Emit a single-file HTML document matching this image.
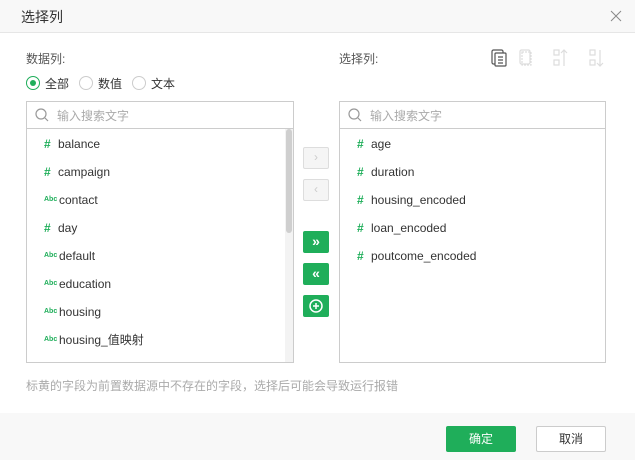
<!DOCTYPE html>
<html><head><meta charset="utf-8"><style>
*{box-sizing:border-box;margin:0;padding:0}
body{width:635px;height:460px;background:#fff;font-family:"Liberation Sans","Noto Sans CJK SC",sans-serif;font-size:12px;color:#333;position:relative;overflow:hidden}
.abs{position:absolute}
.hdr{left:0;top:0;width:635px;height:33px;background:#f8f8f8;border-bottom:1px solid #e6e6e6}
.box{border:1px solid #ccc;background:#fff}
.search{height:27px;border-bottom:1px solid #ccc;position:relative}
.search span{position:absolute;left:30px;top:5px;color:#aaa;font-size:12px}
.item{position:absolute;left:17px;font-size:12px;color:#333;height:16px;line-height:16px}
.item i{font-style:normal;color:#1fae5a;font-weight:bold;display:inline-block;width:14px}
.item i.a{font-size:7px;font-weight:bold;vertical-align:3px;width:15px}
.btn{position:absolute;left:303px;width:26px;height:22px;border-radius:2px}
.g{background:#1fae5a;color:#fff;text-align:center;line-height:21px;font-weight:bold;font-size:14px}
.d{border:1px solid #ddd;background:#f5f5f5;color:#ccc;text-align:center;line-height:19px;font-size:12px}
</style></head><body>
<div class="abs hdr"></div>
<div class="abs" style="left:21px;top:7px;font-size:14px;color:#333">选择列</div>
<svg class="abs" style="left:610px;top:10px" width="12" height="12"><path d="M1 1L11 11M11 1L1 11" stroke="#888" stroke-width="1"/></svg>
<div class="abs" style="left:26px;top:50px;color:#555">数据列:</div>
<div class="abs" style="left:26px;top:76px;width:14px;height:14px;border:1px solid #1fae5a;border-radius:50%"></div>
<div class="abs" style="left:30px;top:80px;width:6px;height:6px;background:#1fae5a;border-radius:50%"></div>
<div class="abs" style="left:45px;top:75px;color:#333">全部</div>
<div class="abs" style="left:79px;top:76px;width:14px;height:14px;border:1px solid #ccc;border-radius:50%"></div>
<div class="abs" style="left:98px;top:75px;color:#333">数值</div>
<div class="abs" style="left:132px;top:76px;width:14px;height:14px;border:1px solid #ccc;border-radius:50%"></div>
<div class="abs" style="left:151px;top:75px;color:#333">文本</div>

<div class="abs" style="left:339px;top:50px;color:#555">选择列:</div>
<svg class="abs" style="left:491px;top:48px" width="120" height="20" fill="none" stroke-width="1.2">
<rect x="1" y="2" width="11" height="14" rx="1.5" stroke="#555"/><rect x="4" y="5" width="11" height="13" rx="1" stroke="#555" fill="#fff"/><path d="M7 9h5M7 12h5M7 15h5" stroke="#555"/>
<rect x="29" y="2" width="10" height="14" rx="1.5" stroke="#ddd"/><rect x="31" y="4" width="9" height="13" stroke="#ddd" stroke-dasharray="2 1"/>
<rect x="63" y="2" width="5" height="5" stroke="#ddd"/><rect x="63" y="12" width="5" height="5" stroke="#ddd"/><path d="M73 18V2M70 5l3-3 3 3" stroke="#ddd"/>
<rect x="99" y="2" width="5" height="5" stroke="#ddd"/><rect x="99" y="12" width="5" height="5" stroke="#ddd"/><path d="M109 2v16M106 15l3 3 3-3" stroke="#ddd"/>
</svg>

<div class="abs box" style="left:26px;top:101px;width:268px;height:262px">
<div class="search"><svg style="position:absolute;left:8px;top:6px" width="14" height="14" fill="none" stroke="#999" stroke-width="1.2"><circle cx="6" cy="6" r="5"/><path d="M10 10l3 3"/></svg><span>输入搜索文字</span></div>
<div class="item" style="top:34px"><i>#</i>balance</div>
<div class="item" style="top:62px"><i>#</i>campaign</div>
<div class="item" style="top:90px"><i class="a">Abc</i>contact</div>
<div class="item" style="top:118px"><i>#</i>day</div>
<div class="item" style="top:146px"><i class="a">Abc</i>default</div>
<div class="item" style="top:174px"><i class="a">Abc</i>education</div>
<div class="item" style="top:202px"><i class="a">Abc</i>housing</div>
<div class="item" style="top:230px"><i class="a">Abc</i>housing_值映射</div>
<div style="position:absolute;left:258px;top:27px;width:8px;height:233px;background:#f3f3f3"></div>
<div style="position:absolute;left:259px;top:27px;width:6px;height:104px;background:#cfcfcf;border-radius:3px"></div>
</div>

<div class="btn d" style="top:147px">›</div>
<div class="btn d" style="top:179px">‹</div>
<div class="btn g" style="top:231px">»</div>
<div class="btn g" style="top:263px">«</div>
<div class="btn g" style="top:295px"><svg width="14" height="14" style="margin-top:4px" fill="none" stroke="#fff" stroke-width="1.5"><circle cx="7" cy="7" r="6"/><path d="M7 4v6M4 7h6"/></svg></div>

<div class="abs box" style="left:339px;top:101px;width:267px;height:262px">
<div class="search"><svg style="position:absolute;left:8px;top:6px" width="14" height="14" fill="none" stroke="#999" stroke-width="1.2"><circle cx="6" cy="6" r="5"/><path d="M10 10l3 3"/></svg><span>输入搜索文字</span></div>
<div class="item" style="top:34px"><i>#</i>age</div>
<div class="item" style="top:62px"><i>#</i>duration</div>
<div class="item" style="top:90px"><i>#</i>housing_encoded</div>
<div class="item" style="top:118px"><i>#</i>loan_encoded</div>
<div class="item" style="top:146px"><i>#</i>poutcome_encoded</div>
</div>

<div class="abs" style="left:26px;top:377px;color:#aaa;font-size:12px">标黄的字段为前置数据源中不存在的字段，选择后可能会导致运行报错</div>
<div class="abs" style="left:0;top:413px;width:635px;height:47px;background:#f8f8f8"></div>
<div class="abs" style="left:446px;top:426px;width:70px;height:26px;background:#1fae5a;border-radius:2px;color:#fff;text-align:center;line-height:26px">确定</div>
<div class="abs" style="left:536px;top:426px;width:70px;height:26px;background:#fff;border:1px solid #ccc;border-radius:2px;color:#333;text-align:center;line-height:24px">取消</div>
</body></html>
